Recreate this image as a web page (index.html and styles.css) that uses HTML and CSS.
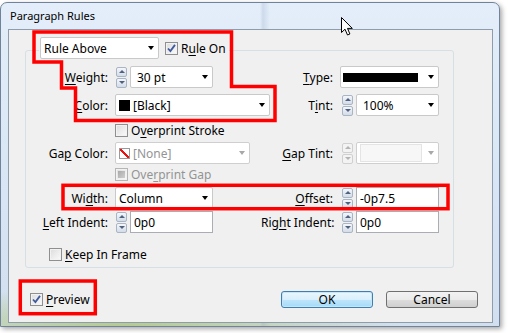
FILE: index.html
```html
<!DOCTYPE html>
<html lang="en">
<head>
  <meta charset="UTF-8" />
  <title>Paragraph Rules</title>
  <link rel="stylesheet" href="styles.css">
</head>
<body>
  <div class="window">
    <div class="titlebar">Paragraph Rules</div>
    <div class="client">
      <div class="group">
        <div class="group-head">
          <div class="combo w-rule"><span>Rule Above</span><i class="arrow"></i></div>
          <div class="check"><span class="box on"><svg viewBox="0 0 11 11"><path d="M2 5.5l2.4 2.6 4.6-6.2"/></svg></span><span>R<u>u</u>le On</span></div>
        </div>

        <div class="row">
          <span class="lbl"><u>W</u>eight:</span>
          <div class="ctl">
            <div class="spin"><span class="up"></span><span class="down"></span></div>
            <div class="combo edit w-small"><span>30 pt</span><i class="arrow"></i></div>
          </div>
          <span class="lbl"><u>T</u>ype:</span>
          <div class="ctl">
            <div class="combo w-type"><span class="stroke-line"></span><i class="arrow"></i></div>
          </div>
        </div>

        <div class="row gap-6">
          <span class="lbl"><u>C</u>olor:</span>
          <div class="ctl">
            <div class="combo w-color"><span class="val"><span class="swatch black"></span>[Black]</span><i class="arrow"></i></div>
          </div>
          <span class="lbl">T<u>i</u>nt:</span>
          <div class="ctl right">
            <div class="spin"><span class="up"></span><span class="down"></span></div>
            <div class="combo edit w-tint"><span>100%</span><i class="arrow"></i></div>
          </div>
        </div>

        <div class="row check-row gap-6">
          <span></span>
          <div class="check"><span class="box"></span><span>O<u>v</u>erprint Stroke</span></div>
        </div>

        <div class="row gap-7">
          <span class="lbl">Ga<u>p</u> Color:</span>
          <div class="ctl">
            <div class="combo off w-gap"><span class="val"><span class="swatch none"></span>[None]</span><i class="arrow"></i></div>
          </div>
          <span class="lbl"><u>G</u>ap Tint:</span>
          <div class="ctl right">
            <div class="spin off"><span class="up"></span><span class="down"></span></div>
            <div class="combo off w-tint"><span class="blank"></span><i class="arrow"></i></div>
          </div>
        </div>

        <div class="row check-row gap-2">
          <span></span>
          <div class="check off"><span class="box mixed"></span><span>Ove<u>r</u>print Gap</span></div>
        </div>

        <div class="row gap-8">
          <span class="lbl">Wi<u>d</u>th:</span>
          <div class="ctl">
            <div class="combo w-width"><span>Column</span><i class="arrow"></i></div>
          </div>
          <span class="lbl"><u>O</u>ffset:</span>
          <div class="ctl right">
            <div class="spin"><span class="up"></span><span class="down"></span></div>
            <div class="field w-tint">-0p7.5</div>
          </div>
        </div>

        <div class="row gap-2">
          <span class="lbl"><u>L</u>eft Indent:</span>
          <div class="ctl">
            <div class="spin"><span class="up"></span><span class="down"></span></div>
            <div class="field w-small">0p0</div>
          </div>
          <span class="lbl">Rig<u>h</u>t Indent:</span>
          <div class="ctl right">
            <div class="spin"><span class="up"></span><span class="down"></span></div>
            <div class="field w-tint">0p0</div>
          </div>
        </div>

        <div class="keep">
          <div class="check"><span class="box"></span><span><u>K</u>eep In Frame</span></div>
        </div>
      </div>

      <div class="footer">
        <div class="check"><span class="box on"><svg viewBox="0 0 11 11"><path d="M2 5.5l2.4 2.6 4.6-6.2"/></svg></span><span><u>P</u>review</span></div>
        <div class="buttons">
          <button class="btn default">OK</button>
          <button class="btn">Cancel</button>
        </div>
      </div>
    </div>
  </div>

  <svg class="cursor" width="13" height="19" viewBox="0 0 13 19">
    <path d="M0.5 0.5v15l3.5-3.3 2.5 5.8 2.4-1-2.4-5.6h4.8z"/>
  </svg>

  <svg class="marks" width="508" height="333" viewBox="0 0 508 333">
    <polygon points="34,32 231.5,32 231.5,86.5 275,86.5 275,120.5 75.5,120.5 75.5,88 61.5,88 61.5,62 34,62"/>
    <rect x="63" y="185.3" width="385" height="23.4"/>
    <rect x="20.3" y="281" width="75" height="32.7"/>
  </svg>
</body>
</html>
```

FILE: styles.css
```css
:root {
  --face: #f0f0f0;
  --text: #000000;
  --muted: #949494;
  --combo-border: #c9c9c9;
  --field-border: #aaadb3;
  --mark: #ff0000;
}

* {
  margin: 0;
  padding: 0;
  box-sizing: border-box;
}

body {
  position: relative;
  width: 508px;
  height: 333px;
  overflow: hidden;
  padding-top: 2px;
  background: #ffffff;
  color: var(--text);
  font-family: "Noto Sans", "Open Sans", sans-serif;
  font-size: 12px;
}

u {
  text-decoration-thickness: 1px;
  text-underline-offset: 2px;
}

/* window frame */

.window {
  width: 500px;
  height: 325px;
  padding: 0 6px 0 7px;
  border: 1px solid #70839a;
  border-radius: 7px 7px 0 0;
  background:
    linear-gradient(90deg, transparent 52%, rgba(140, 160, 190, .25) 52.6%, transparent 54%),
    radial-gradient(ellipse 55% 12% at 25% 100%, rgba(170, 195, 110, .75), transparent),
    linear-gradient(180deg, #e4eefa 0%, #d7e5f4 60%, #d2dfee 100%);
  box-shadow: 2px 2px 5px rgba(0, 0, 0, .35);
}

.titlebar {
  height: 26px;
  line-height: 26px;
  padding-left: 2px;
  font-size: 11px;
}

.client {
  width: 485px;
  height: 294px;
  padding-top: 20px;
  border: 1px solid #8f9cac;
  background: var(--face);
}

/* group box */

.group {
  width: 429px;
  margin-left: 16px;
  padding-bottom: 8px;
  border: 1px solid #d5dfe5;
  border-radius: 3px;
}

.group-head {
  display: flex;
  align-items: center;
  gap: 6px;
  width: max-content;
  height: 22px;
  margin: -14px 0 0 13px;
  padding: 0 3px 0 1px;
  background: var(--face);
}

.row {
  display: grid;
  grid-template-columns: 89px 146px 79px 99px;
  align-items: center;
  height: 22px;
  margin-top: 7px;
}

.row.gap-2 { margin-top: 2px; }
.row.gap-6 { margin-top: 6px; }
.row.gap-7 { margin-top: 7px; }
.row.gap-8 { margin-top: 8px; }

.row.check-row {
  height: 13px;
}

.lbl {
  padding-right: 7px;
  text-align: right;
  white-space: nowrap;
}

.ctl {
  display: flex;
  align-items: center;
  gap: 3px;
}

.ctl > * {
  flex-shrink: 0;
}

.ctl.right .spin {
  margin-left: 2px;
}

.keep {
  margin: 13px 0 0 23px;
  height: 13px;
}

/* controls */

.combo,
.field {
  display: flex;
  align-items: center;
  height: 22px;
  background: #ffffff;
  white-space: nowrap;
}

.combo {
  justify-content: space-between;
  padding: 0 4px 0 3px;
  border: 1px solid var(--combo-border);
  border-radius: 2px;
}

.combo.edit {
  padding-left: 6px;
}

.combo.off {
  border-color: #cfcfcf;
  color: var(--muted);
}

.field {
  padding-left: 3px;
  border: 1px solid var(--field-border);
}

.arrow {
  width: 0;
  height: 0;
  border-left: 3.5px solid transparent;
  border-right: 3.5px solid transparent;
  border-top: 4px solid #000000;
}

.combo.off .arrow {
  border-top-color: #a8a8a8;
}

.w-rule { width: 119px; }
.w-small { width: 83px; }
.w-type { width: 99px; padding-left: 2px; }
.w-color { width: 155px; }
.w-tint { width: 83px; }
.w-gap { width: 135px; }
.w-width { width: 98px; }

.stroke-line {
  width: 75px;
  height: 9px;
  background: #000000;
}

.blank {
  width: 62px;
  height: 18px;
  border: 1px solid #e4e4e4;
  background: #f7f7f7;
}

.val {
  display: flex;
  align-items: center;
  gap: 3px;
}

.swatch {
  width: 11px;
  height: 11px;
}

.swatch.black {
  background: #000000;
}

.swatch.none {
  border: 1px solid #9a9a9a;
  background: linear-gradient(to top right, #ffffff 41%, #ee1111 41%, #ee1111 59%, #ffffff 59%);
}

.spin {
  display: flex;
  flex-direction: column;
  gap: 1px;
  width: 11px;
  margin-left: 1px;
}

.spin span {
  display: flex;
  align-items: center;
  justify-content: center;
  height: 10px;
  border: 1px solid #a9b5c4;
  border-radius: 2px;
  background: linear-gradient(180deg, #f4f7fb, #d3dce8);
}

.spin span::after {
  content: "";
  border-left: 3px solid transparent;
  border-right: 3px solid transparent;
}

.spin .up::after {
  border-bottom: 3px solid #50617f;
}

.spin .down::after {
  border-top: 3px solid #50617f;
}

.spin.off span {
  border-color: #d0d0d0;
  background: #f3f3f3;
}

.spin.off .up::after { border-bottom-color: #b4b4b4; }
.spin.off .down::after { border-top-color: #b4b4b4; }

.check {
  display: flex;
  align-items: center;
  gap: 3px;
  white-space: nowrap;
}

.check.off {
  color: var(--muted);
}

.box {
  display: flex;
  align-items: center;
  justify-content: center;
  width: 13px;
  height: 13px;
  border: 1px solid #8f8f8f;
  background: linear-gradient(135deg, #dcdcdc, #fbfbfb);
  box-shadow: inset 0 0 0 1px #f2f2f2;
}

.box svg {
  width: 11px;
  height: 11px;
}

.box path {
  fill: none;
  stroke: #3f5a9e;
  stroke-width: 1.8;
}

.box.mixed {
  border-color: #b5b5b5;
}

.box.mixed::after {
  content: "";
  width: 7px;
  height: 7px;
  background: linear-gradient(135deg, #a9a9a9, #cfcfcf);
}

/* footer */

.footer {
  display: flex;
  justify-content: space-between;
  align-items: center;
  height: 17px;
  margin-top: 23px;
  padding: 0 14px 0 21px;
}

.buttons {
  display: flex;
  gap: 13px;
}

.btn {
  width: 92px;
  height: 17px;
  border: 1px solid #707070;
  border-radius: 3px;
  background: linear-gradient(180deg, #f2f2f2 0%, #ebebeb 50%, #dddddd 51%, #cfcfcf 100%);
  color: var(--text);
  font: inherit;
  line-height: 14px;
}

.btn.default {
  border-color: #3c7fb1;
  background: linear-gradient(180deg, #eaf6fd 0%, #d9f0fc 50%, #bee6fd 51%, #a7d9f5 100%);
  box-shadow: inset 0 0 0 1px #c6e6f8;
}

/* overlays */

.cursor {
  position: absolute;
  left: 341px;
  top: 17px;
}

.cursor path {
  fill: #ffffff;
  stroke: #000000;
  stroke-width: 1;
}

.marks {
  position: absolute;
  left: 0;
  top: 0;
  pointer-events: none;
}

.marks polygon,
.marks rect {
  fill: none;
  stroke: var(--mark);
  stroke-width: 3.5;
}
```
